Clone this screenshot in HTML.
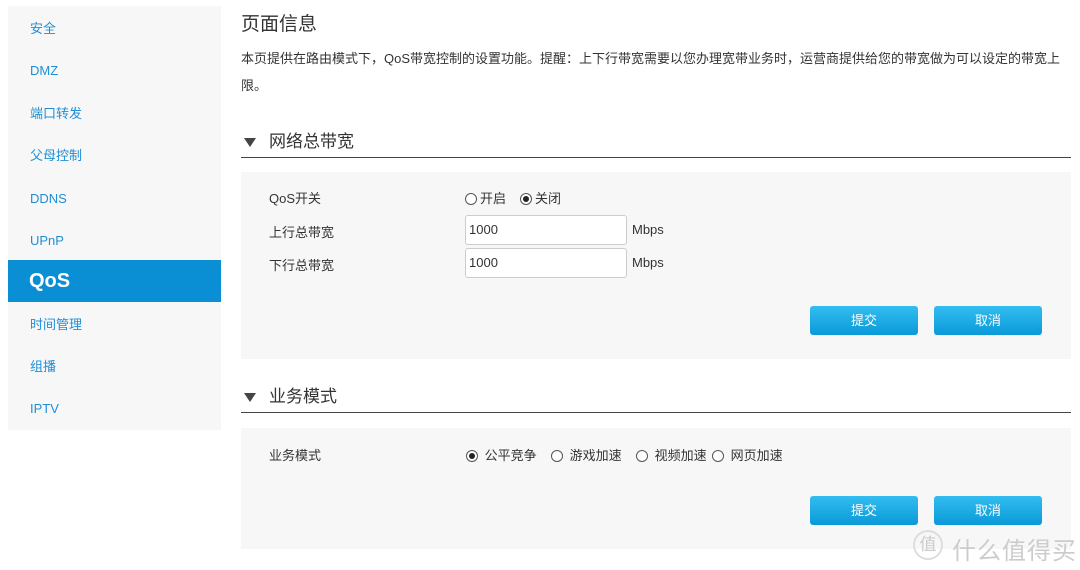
<!DOCTYPE html>
<html><head><meta charset="utf-8"><style>
*{margin:0;padding:0;box-sizing:border-box}
body{width:1080px;height:570px;background:#fff;font-family:"Liberation Sans","Noto Sans CJK SC",sans-serif;position:relative;overflow:hidden;color:#333}
.side{position:absolute;left:8px;top:6px;width:213px;height:424px;background:#f7f7f7}
.side div{position:absolute;left:22px;font-size:13px;color:#1e8fd6;line-height:20px}
.side .act{left:0;width:213px;height:42px;background:#0a8ed4;color:#fff;font-weight:bold;font-size:20px;line-height:42px;padding-left:21px}
.a{position:absolute}
h1{position:absolute;left:241px;top:9px;font-size:19px;font-weight:normal;color:#333}
.p{position:absolute;left:241px;font-size:13px;color:#333}
.sec{position:absolute;left:241px;width:830px;height:20px;border-bottom:1.5px solid #444}
.sec span{position:absolute;left:28px;top:-6px;font-size:17px}
.sec i{position:absolute;left:3px;top:0;width:0;height:0;border-left:6px solid transparent;border-right:6px solid transparent;border-top:9px solid #444}
.panel{position:absolute;left:241px;width:830px;background:#f7f7f7}
.lbl{position:absolute;font-size:13px;color:#333}
.inp{position:absolute;left:465px;width:162px;height:30px;border:1px solid #ccc;border-radius:3px;background:#fff;font-size:13px;padding-left:3px;line-height:28px}
.btn{position:absolute;width:108px;height:29px;border-radius:3px;background:linear-gradient(#33bdf0,#0a9ad8);color:#fff;font-size:13px;text-align:center;line-height:29px}
.r{display:inline-block;width:12px;height:12px;border:1px solid #555;border-radius:50%;vertical-align:-2px;margin-right:3px;position:relative;background:#fff}
.r.on::after{content:"";position:absolute;left:2px;top:2px;width:6px;height:6px;border-radius:50%;background:#222}
.rg{position:absolute;top:445px;font-size:13px}
</style></head><body>
<div class="side">
<div style="top:13px">安全</div>
<div style="top:55px">DMZ</div>
<div style="top:98px">端口转发</div>
<div style="top:140px">父母控制</div>
<div style="top:183px">DDNS</div>
<div style="top:225px">UPnP</div>
<div class="act" style="top:254px">QoS</div>
<div style="top:309px">时间管理</div>
<div style="top:351px">组播</div>
<div style="top:393px">IPTV</div>
</div>
<h1>页面信息</h1>
<div class="p" style="top:48px">本页提供在路由模式下，QoS带宽控制的设置功能。提醒：上下行带宽需要以您办理宽带业务时，运营商提供给您的带宽做为可以设定的带宽上</div>
<div class="p" style="top:75px">限。</div>
<div class="sec" style="top:138px"><i></i><span style="top:-11px">网络总带宽</span></div>
<div class="panel" style="top:172px;height:187px"></div>
<div class="lbl" style="left:269px;top:188px">QoS开关</div>
<div class="lbl" style="left:465px;top:188px"><span class="r"></span>开启</div>
<div class="lbl" style="left:520px;top:188px"><span class="r on"></span>关闭</div>
<div class="lbl" style="left:269px;top:222px">上行总带宽</div>
<div class="inp" style="top:215px">1000</div>
<div class="lbl" style="left:632px;top:222px">Mbps</div>
<div class="lbl" style="left:269px;top:255px">下行总带宽</div>
<div class="inp" style="top:248px">1000</div>
<div class="lbl" style="left:632px;top:255px">Mbps</div>
<div class="btn" style="left:810px;top:306px">提交</div>
<div class="btn" style="left:934px;top:306px">取消</div>
<div class="sec" style="top:393px"><i></i><span style="top:-11px">业务模式</span></div>
<div class="panel" style="top:428px;height:121px"></div>
<div class="lbl" style="left:269px;top:445px">业务模式</div>
<div class="rg" style="left:466px"><span class="r on"></span> 公平竞争</div>
<div class="rg" style="left:551px"><span class="r"></span> 游戏加速</div>
<div class="rg" style="left:636px"><span class="r"></span> 视频加速</div>
<div class="rg" style="left:712px"><span class="r"></span> 网页加速</div>
<div class="btn" style="left:810px;top:496px">提交</div>
<div class="btn" style="left:934px;top:496px">取消</div>
<div class="a" style="left:913px;top:530px;width:30px;height:30px;border:2px solid #ddd;border-radius:50%;color:#ccc;font-size:17px;text-align:center;line-height:26px">值</div>
<div class="a" style="left:952px;top:531px;color:#ccc;font-size:24px;letter-spacing:1px">什么值得买</div>
</body></html>
